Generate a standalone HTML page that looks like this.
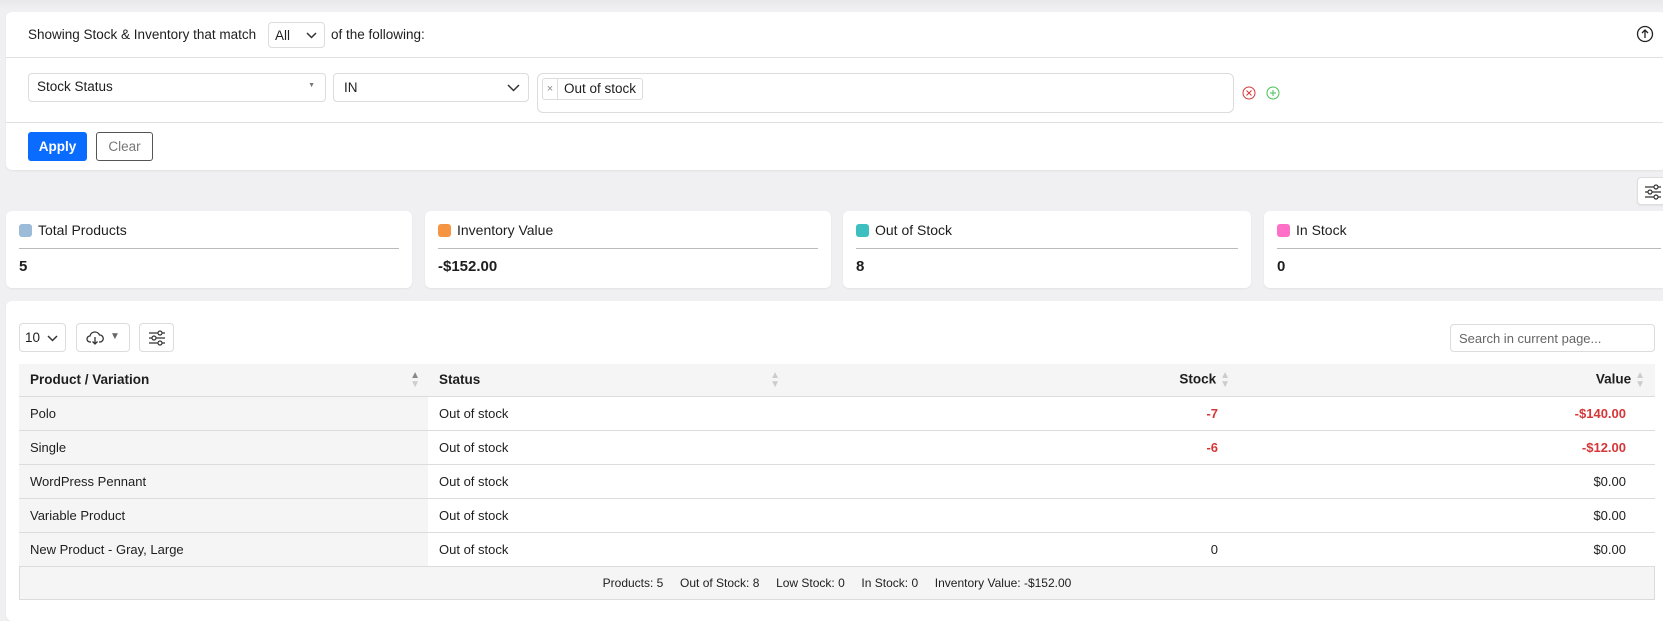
<!DOCTYPE html>
<html><head><meta charset="utf-8"><style>
*{box-sizing:border-box;margin:0;padding:0}
body{width:1663px;height:608px;overflow:hidden;background:#f0f0f2;font-family:"Liberation Sans",sans-serif;color:#1e1e1e;position:relative}
.abs{position:absolute}
.card{position:absolute;background:#fff;border-radius:6px;box-shadow:0 1px 2px rgba(0,0,0,.06)}
.box{position:absolute;border:1px solid #dcdcde;border-radius:4px;background:#fff;font-size:13.5px}
.hr{position:absolute;height:1px;background:#e0e0e0}
table{border-collapse:collapse;position:absolute;left:19px;top:364px;width:1636px;font-size:13px;table-layout:fixed}
td,th{border-bottom:1px solid #dcdcde;padding:0 11px;height:34px;text-align:left;vertical-align:middle}
th{height:32px;background:#f5f5f5;font-weight:bold;font-size:13.5px;position:relative}
td.p{background:#f5f5f5}
.r{text-align:right}
.neg{color:#d63638;font-weight:bold}
.stat .lbl{position:absolute;left:13px;top:11px;font-size:14px;display:flex;align-items:center;gap:6px}
.stat .sw{width:13px;height:13px;border-radius:3px}
.stat .ln{position:absolute;left:13px;right:13px;top:37px;height:1px;background:#bbb}
.stat .v{position:absolute;left:13px;top:47px;font-size:15px;font-weight:bold}
.sort{position:absolute;top:7px;color:#ccc;font-size:10px;line-height:9px;font-weight:normal}
.sorti{display:inline-block;vertical-align:middle;margin-left:4px;color:#ccc;font-size:10px;line-height:9px;font-weight:normal}
</style></head><body>
<div class="abs" style="left:0;top:0;width:1663px;height:10px;background:linear-gradient(#e8e8ea,#f0f0f2)"></div>
<div class="card" style="left:6px;top:12px;width:1660px;height:158px">
  <div class="abs" style="left:22px;top:14px;font-size:13.5px;line-height:17px">Showing Stock &amp; Inventory that match</div>
  <div class="box" style="left:262px;top:10px;width:57px;height:26px;padding:5px 6px">All<svg class="abs" style="right:7px;top:9px" width="11" height="7"><path d="M1 1l4.5 4.5L10 1" stroke="#333" fill="none" stroke-width="1.5"/></svg></div>
  <div class="abs" style="left:325px;top:14px;font-size:13.5px;line-height:17px">of the following:</div>
  <svg class="abs" style="left:1630px;top:13px" width="18" height="18"><circle cx="9" cy="9" r="7.5" stroke="#222" stroke-width="1.3" fill="none"/><path d="M9 13V5M6 8l3-3 3 3" stroke="#222" stroke-width="1.3" fill="none"/></svg>
  <div class="hr" style="left:0;right:0;top:45px"></div>
  <div class="box" style="left:22px;top:61px;width:298px;height:29px;padding:5px 8px">Stock Status<span class="abs" style="right:10px;top:8px;font-size:7px;color:#777">▼</span></div>
  <div class="box" style="left:327px;top:61px;width:196px;height:29px;padding:6px 10px">IN<svg class="abs" style="right:8px;top:10px" width="13" height="8"><path d="M1 1l5.5 5.5L12 1" stroke="#333" fill="none" stroke-width="1.5"/></svg></div>
  <div class="box" style="left:531px;top:61px;width:697px;height:40px;border-radius:6px">
    <div class="abs" style="left:4px;top:4px;height:22px;border:1px solid #dcdcde;border-radius:3px;display:flex;font-size:13.5px;line-height:20px"><span style="width:15px;text-align:center;color:#888;border-right:1px solid #dcdcde;font-size:11px">×</span><span style="padding:0 6px">Out of stock</span></div>
  </div>
  <svg class="abs" style="left:1236px;top:74px" width="14" height="14"><circle cx="7" cy="7" r="6" stroke="#d63638" fill="none"/><path d="M4.5 4.5l5 5M9.5 4.5l-5 5" stroke="#d63638"/></svg>
  <svg class="abs" style="left:1260px;top:74px" width="14" height="14"><circle cx="7" cy="7" r="6" stroke="#46c254" fill="none"/><path d="M7 4v6M4 7h6" stroke="#46c254"/></svg>
  <div class="hr" style="left:0;right:0;top:110px"></div>
  <div class="abs" style="left:22px;top:120px;width:59px;height:29px;background:#0a6cff;color:#fff;border-radius:3px;font-size:13.5px;font-weight:bold;text-align:center;line-height:29px">Apply</div>
  <div class="abs" style="left:90px;top:120px;width:57px;height:29px;border:1px solid #555;color:#777;border-radius:3px;font-size:13.5px;text-align:center;line-height:27px">Clear</div>
</div>
<div class="card" style="left:1637px;top:177px;width:40px;height:28px;border:1px solid #ddd;border-radius:4px">
  <svg class="abs" style="left:6px;top:5px" width="18" height="18"><g stroke="#333" stroke-width="1.2" fill="#fff"><path d="M1 4h16M1 9h16M1 14h16"/><circle cx="12" cy="4" r="2"/><circle cx="6" cy="9" r="2"/><circle cx="12" cy="14" r="2"/></g></svg>
</div>
<div class="card stat" style="left:6px;top:211px;width:406px;height:77px"><div class="lbl"><span class="sw" style="background:#9bbbd9"></span>Total Products</div><div class="ln"></div><div class="v">5</div></div>
<div class="card stat" style="left:425px;top:211px;width:406px;height:77px"><div class="lbl"><span class="sw" style="background:#f59441"></span>Inventory Value</div><div class="ln"></div><div class="v">-$152.00</div></div>
<div class="card stat" style="left:843px;top:211px;width:408px;height:77px"><div class="lbl"><span class="sw" style="background:#3dbfbf"></span>Out of Stock</div><div class="ln"></div><div class="v">8</div></div>
<div class="card stat" style="left:1264px;top:211px;width:410px;height:77px"><div class="lbl"><span class="sw" style="background:#ff6ec7"></span>In Stock</div><div class="ln"></div><div class="v">0</div></div>
<div class="card" style="left:6px;top:301px;width:1670px;height:320px"></div>
<div class="box" style="left:19px;top:323px;width:47px;height:29px;padding:6px 5px">10<svg class="abs" style="right:7px;top:11px" width="11" height="7"><path d="M1 1l4.5 4.5L10 1" stroke="#333" fill="none" stroke-width="1.5"/></svg></div>
<div class="box" style="left:76px;top:323px;width:54px;height:29px"><svg class="abs" style="left:9px;top:6px" width="18" height="16"><path d="M5 12H4a3 3 0 0 1 0-6 5 5 0 0 1 9.5-1A3.5 3.5 0 0 1 14 12h-1" stroke="#333" fill="none" stroke-width="1.3"/><path d="M9 7v7M6.5 11.5L9 14l2.5-2.5" stroke="#333" fill="none" stroke-width="1.3"/></svg><span class="abs" style="left:33px;top:7px;font-size:10px;color:#666">▼</span></div>
<div class="box" style="left:139px;top:323px;width:35px;height:29px"><svg class="abs" style="left:8px;top:5px" width="18" height="18"><g stroke="#333" stroke-width="1.2" fill="#fff"><path d="M1 4h16M1 9h16M1 14h16"/><circle cx="12" cy="4" r="2"/><circle cx="6" cy="9" r="2"/><circle cx="12" cy="14" r="2"/></g></svg></div>
<div class="box" style="left:1450px;top:324px;width:205px;height:28px;padding:6px 8px;color:#666;font-size:13px">Search in current page...</div>
<div class="abs" style="left:19px;top:364px;width:1636px;height:236px;border:1px solid #dcdcde;background:#f5f5f5"></div>
<table>
<colgroup><col style="width:409px"><col style="width:402px"><col style="width:410px"><col></colgroup>
<tr><th>Product / Variation<span class="sort" style="right:8px"><span style="color:#888">▲</span><br>▼</span></th><th>Status<span class="sort" style="right:50px">▲<br>▼</span></th><th class="r" style="padding-right:10px">Stock<span class="sorti">▲<br>▼</span></th><th class="r" style="padding-right:10px">Value<span class="sorti">▲<br>▼</span></th></tr>
<tr style="background:#fff"><td class="p">Polo</td><td>Out of stock</td><td class="r neg" style="padding-right:22px">-7</td><td class="r neg" style="padding-right:29px">-$140.00</td></tr>
<tr style="background:#fff"><td class="p">Single</td><td>Out of stock</td><td class="r neg" style="padding-right:22px">-6</td><td class="r neg" style="padding-right:29px">-$12.00</td></tr>
<tr style="background:#fff"><td class="p">WordPress Pennant</td><td>Out of stock</td><td></td><td class="r" style="padding-right:29px">$0.00</td></tr>
<tr style="background:#fff"><td class="p">Variable Product</td><td>Out of stock</td><td></td><td class="r" style="padding-right:29px">$0.00</td></tr>
<tr style="background:#fff"><td class="p">New Product - Gray, Large</td><td>Out of stock</td><td class="r" style="padding-right:22px">0</td><td class="r" style="padding-right:29px">$0.00</td></tr>
</table>
<div class="abs" style="left:19px;top:568px;width:1636px;height:31px;text-align:center;font-size:12px;line-height:31px">Products: 5 &nbsp;&nbsp;&nbsp; Out of Stock: 8 &nbsp;&nbsp;&nbsp; Low Stock: 0 &nbsp;&nbsp;&nbsp; In Stock: 0 &nbsp;&nbsp;&nbsp; Inventory Value: -$152.00</div>
</body></html>
